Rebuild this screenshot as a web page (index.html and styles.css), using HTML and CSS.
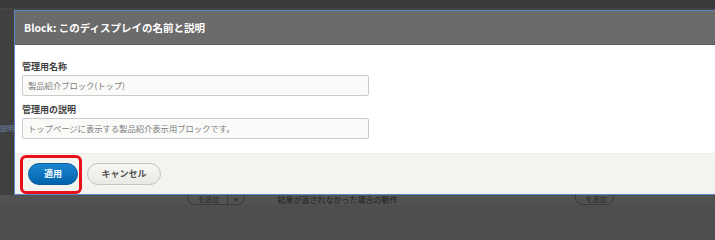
FILE: index.html
```html
<!DOCTYPE html>
<html lang="ja">
<head>
<meta charset="utf-8">
<link rel="stylesheet" href="styles.css">
</head>
<body>
<div class="screen">
  <div class="topstrip"></div>
  <div class="middle">
    <div class="gutter"><span class="gutter-text">説明</span></div>
    <div class="dialog">
      <div class="titlebar">Block: このディスプレイの名前と説明</div>
      <div class="dbody">
        <label class="flabel">管理用名称</label>
        <div class="finput">製品紹介ブロック(トップ)</div>
        <label class="flabel second">管理用の説明</label>
        <div class="finput">トップページに表示する製品紹介表示用ブロックです。</div>
      </div>
      <div class="footer">
        <span class="highlight"><button class="btn primary">適用</button></span>
        <button class="btn secondary">キャンセル</button>
      </div>
    </div>
  </div>
  <div class="bottomstrip">
    <div class="bottom-row">
      <span class="ghost-btn">を追加<span class="ghost-caret">▾</span></span>
      <span class="ghost-text">結果が返されなかった場合の動作</span>
      <span class="ghost-btn right">を追加</span>
    </div>
  </div>
</div>
</body>
</html>
```

FILE: styles.css
```css
html, body {
  margin: 0;
  padding: 0;
}
body {
  background: #4e4e4e;
  font-family: "Noto Sans CJK JP", "Noto Sans", "DejaVu Sans", sans-serif;
  width: 715px;
  height: 205px;
  overflow: hidden;
}
.screen {
  display: flex;
  flex-direction: column;
  height: 205px;
}
.topstrip {
  height: 10px;
  background: #3b3b3b;
  box-shadow: inset 0 -2px 0 #454545;
}
.middle {
  display: flex;
}
.gutter {
  width: 14px;
  background: #404040;
  overflow: hidden;
  display: flex;
  flex-direction: column;
  justify-content: center;
}
.gutter-text {
  font-size: 7px;
  line-height: 8px;
  color: #6f86a8;
  margin-top: 50px;
  white-space: nowrap;
}
.dialog {
  flex: 1;
  border: 1px solid #5a86cc;
  border-right: 0;
  background: #fff;
  display: flex;
  flex-direction: column;
}
.titlebar {
  height: 33px;
  background: #6b6b6b;
  border-bottom: 1px solid #5f5f5f;
  color: #fff;
  font-weight: bold;
  font-size: 10.5px;
  line-height: 33px;
  padding-left: 9px;
}
.dbody {
  height: 108px;
  box-sizing: border-box;
  padding: 16px 0 0 7px;
  display: flex;
  flex-direction: column;
  align-items: flex-start;
}
.flabel {
  font-size: 9px;
  font-weight: bold;
  color: #3f3f3f;
  line-height: 12px;
  height: 12px;
  margin-bottom: 2px;
}
.flabel.second {
  margin-top: 8px;
}
.finput {
  width: 347px;
  height: 21px;
  box-sizing: border-box;
  border: 1px solid #cbcbcb;
  border-radius: 2px;
  background: #fafaf8;
  color: #7c7c7c;
  font-size: 8.3px;
  line-height: 19px;
  padding-left: 5px;
  white-space: nowrap;
}
.footer {
  height: 41px;
  box-sizing: border-box;
  background: #f3f3f0;
  border-top: 1px solid #ececea;
  display: flex;
  align-items: flex-start;
  gap: 9px;
  padding: 9px 0 0 13px;
}
.highlight {
  position: relative;
  display: inline-flex;
}
.highlight::before {
  content: "";
  position: absolute;
  left: -8px;
  top: -8px;
  width: 62px;
  height: 39px;
  box-sizing: border-box;
  border: 3px solid #e8101a;
  border-radius: 6px;
}
.btn {
  font-family: "Noto Sans CJK JP", "Noto Sans", sans-serif;
  font-weight: bold;
  font-size: 9px;
  height: 22px;
  border-radius: 11px;
  padding: 0;
  line-height: 20px;
  cursor: pointer;
}
.primary {
  width: 50px;
  background: linear-gradient(#1a86cf, #0063ad);
  border: 1px solid #0a5b9c;
  color: #fff;
}
.secondary {
  width: 74px;
  background: linear-gradient(#f8f8f5, #e9e9e4);
  border: 1px solid #c4c4c0;
  color: #555;
}
.bottomstrip {
  flex: 1;
  background: #525252;
  overflow: hidden;
}
.bottom-row {
  display: flex;
  align-items: flex-start;
  padding-left: 187px;
  height: 10px;
}
.ghost-btn {
  display: inline-flex;
  align-items: center;
  height: 9px;
  border: 1px solid #3a3a3a;
  border-top: 0;
  border-radius: 0 0 8px 8px;
  padding: 0 6px 0 10px;
  font-size: 7px;
  line-height: 9px;
  color: #2c2c2c;
  gap: 8px;
}
.ghost-caret {
  border-left: 1px solid #3a3a3a;
  padding-left: 6px;
}
.ghost-text {
  margin-left: 33px;
  font-size: 8px;
  line-height: 9px;
  color: #222;
}
.ghost-btn.right {
  margin-left: 177px;
}
```
